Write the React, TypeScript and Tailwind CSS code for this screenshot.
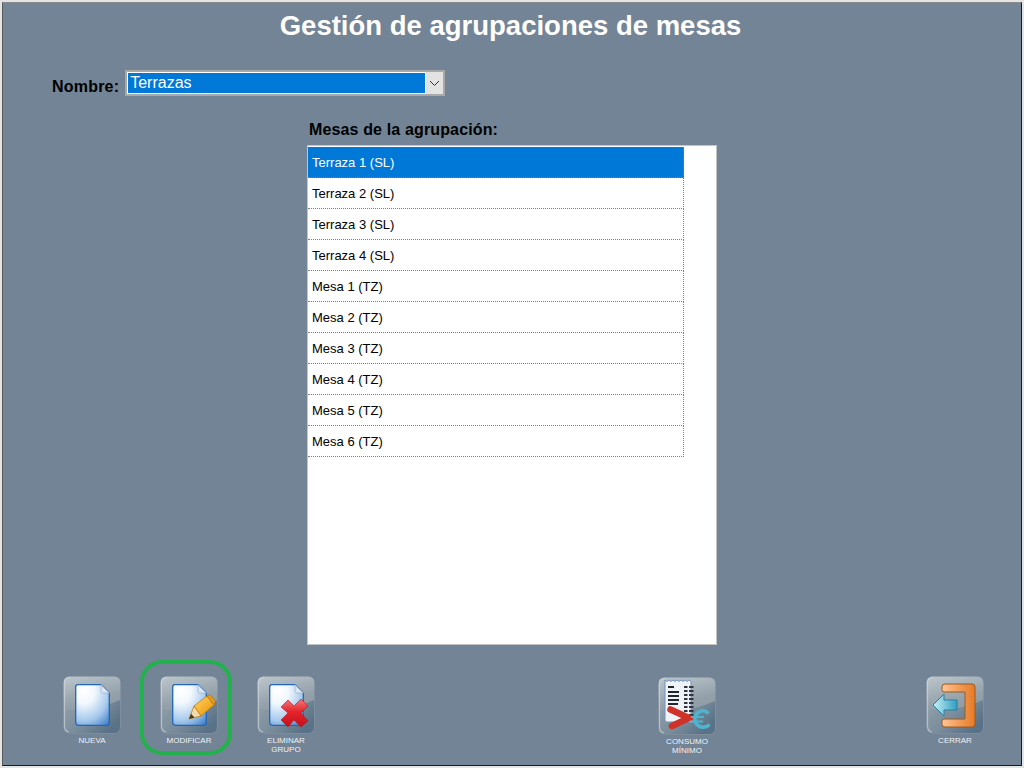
import React from "react";

const rows = [
  "Terraza 1 (SL)", "Terraza 2 (SL)", "Terraza 3 (SL)", "Terraza 4 (SL)",
  "Mesa 1 (TZ)", "Mesa 2 (TZ)", "Mesa 3 (TZ)", "Mesa 4 (TZ)", "Mesa 5 (TZ)", "Mesa 6 (TZ)",
];

function Page({ id, x = 12 }: { id: string; x?: number }) {
  return (
    <g transform={`translate(${x} 8)`}>
      <defs>
        <radialGradient id={`${id}p`} cx="0.25" cy="0.15" r="1.05">
          <stop offset="0" stopColor="#ffffff" />
          <stop offset="0.3" stopColor="#f2f8fd" />
          <stop offset="0.7" stopColor="#a6c9ec" />
          <stop offset="1" stopColor="#4a88cc" />
        </radialGradient>
      </defs>
      <path d="M3 0.7 H26 L34.3 9 V38 Q34.3 41.3 31 41.3 H4 Q0.7 41.3 0.7 38 V3 Q0.7 .7 3 .7Z" fill={`url(#${id}p)`} stroke="#2266b8" strokeWidth="1.3" />
      <path d="M26 0.7 V7 Q26 9 28 9 H34.3Z" fill="#dbe7f2" stroke="#9fb8d2" strokeWidth="0.8" />
    </g>
  );
}

function Tile({ id, children }: { id: string; children?: React.ReactNode }) {
  return (
    <svg width="58" height="58" viewBox="0 0 58 58" className="block shrink-0">
      <defs>
        <linearGradient id={`${id}a`} x1="0" y1="0" x2="0.25" y2="1">
          <stop offset="0" stopColor="#bcc6cc" />
          <stop offset="0.5" stopColor="#94a1ab" />
          <stop offset="1" stopColor="#87959f" />
        </linearGradient>
        <linearGradient id={`${id}b`} x1="0" y1="0" x2="1" y2="0.6">
          <stop offset="0" stopColor="#93a1ab" />
          <stop offset="0.55" stopColor="#7a8d9c" />
          <stop offset="1" stopColor="#5a7287" />
        </linearGradient>
      </defs>
      <rect x="0.5" y="0.5" width="57" height="57" rx="6" fill={`url(#${id}a)`} />
      <path d="M1 33 Q28 37 57 24 V51 Q57 57 51 57 H7 Q1 57 1 51Z" fill={`url(#${id}b)`} />
      <path d="M1.5 7 Q1.5 1.5 7 1.5 M1.5 7 V50 Q1.5 55 6 56" fill="none" stroke="#d5dce0" strokeOpacity="0.6" strokeWidth="1.2" />
      {children}
    </svg>
  );
}

function ToolButton({ label, icon, className }: { label: React.ReactNode; icon: React.ReactNode; className: string }) {
  return (
    <div className={`flex w-[58px] flex-col items-center ${className}`}>
      {icon}
      <div className="mt-[2px] w-[80px] shrink-0 text-center text-[8px] leading-[9px] text-[#eef3f8]">{label}</div>
    </div>
  );
}

function Pencil() {
  return (
    <g>
      <defs>
        <linearGradient id="pen" x1="0" y1="0" x2="1" y2="1">
          <stop offset="0" stopColor="#ffd765" />
          <stop offset="0.55" stopColor="#f6b02c" />
          <stop offset="1" stopColor="#d98a12" />
        </linearGradient>
      </defs>
      <path d="M34 30 L47 20 L54 29 L41 40Z" fill="url(#pen)" stroke="#b87a14" strokeWidth="0.8" />
      <path d="M34 30 L29 43 L41 40Z" fill="#f5d9a8" stroke="#b87a14" strokeWidth="0.8" />
      <path d="M31 37.8 L29 43 L34.5 41.6Z" fill="#4a3a22" />
      <path d="M47 20 L50 18.6 L55.5 25 L54 29Z" fill="#e79a1e" stroke="#b87a14" strokeWidth="0.8" />
    </g>
  );
}

function RedX() {
  return (
    <g>
      <defs>
        <linearGradient id="rx" x1="0" y1="0" x2="0" y2="1">
          <stop offset="0" stopColor="#f27a7a" />
          <stop offset="0.45" stopColor="#e5242c" />
          <stop offset="1" stopColor="#c40f18" />
        </linearGradient>
      </defs>
      <path d="M24 31 L31 24 L37 30 L44 23 L51 30 L44 37 L51 45 L44 51 L37 44 L31 51 L24 44 L31 37Z" fill="url(#rx)" stroke="#b5141b" strokeWidth="0.6" strokeLinejoin="round" />
    </g>
  );
}

function Receipt() {
  const lines: [number, number, number][] = [
    [9, 10, 6], [14, 10, 11], [18, 10, 11], [22, 10, 11], [26, 10, 10], [30, 10, 5],
  ];
  const col: number[] = [9, 13, 17, 21, 25, 29, 33, 37];
  return (
    <g>
      <path d="M7 3 l2 1.4 2-1.4 2 1.4 2-1.4 2 1.4 2-1.4 2 1.4 2-1.4 2 1.4 2-1.4 2 1.4 2-1.4 2 1.4 V43 Q37 45 35 45 H9 Q7 45 7 43Z" fill="#eef3fa" stroke="#6f93c2" strokeWidth="1" />
      {lines.map(([y, x, w]) => (
        <rect key={y} x={x} y={y} width={w} height="2" fill="#22262c" />
      ))}
      {col.map((y) => (
        <g key={y}>
          <rect x="26" y={y} width="3.5" height="2" fill="#33373d" />
          <rect x="31" y={y} width="4.5" height="2" fill="#33373d" />
        </g>
      ))}
      <path d="M12.5 32.5 L31 41 L14 49" fill="none" stroke="#cf3228" strokeWidth="6.5" strokeLinecap="round" strokeLinejoin="miter" />
      <path d="M49.5 35.5 Q46.5 33 43 34 Q37 36 37 42 Q37 48 43 50 Q47 51 50.5 48.5" fill="none" stroke="#4fb4cf" strokeWidth="3.6" strokeLinecap="round" />
      <path d="M33 40 H46 M33 44.5 H45" fill="none" stroke="#4fb4cf" strokeWidth="2" />
    </g>
  );
}

function Exit() {
  return (
    <g>
      <defs>
        <linearGradient id="ex" x1="0" y1="0" x2="1" y2="0">
          <stop offset="0" stopColor="#fdc596" />
          <stop offset="0.55" stopColor="#f19a54" />
          <stop offset="1" stopColor="#e67a28" />
        </linearGradient>
        <linearGradient id="ar" x1="0" y1="0" x2="1" y2="0">
          <stop offset="0" stopColor="#c9f2f8" />
          <stop offset="1" stopColor="#2e9fc0" />
        </linearGradient>
      </defs>
      <path d="M19 8 H46 Q49 8 49 11 V48 Q49 51 46 51 H19 Q16 51 16 48 V45 Q16 43 18 43 H39 V16 H18 Q16 16 16 14 V11 Q16 8 19 8Z" fill="url(#ex)" stroke="#9a5a1c" strokeWidth="1" />
      <path d="M7 29 L18 18 V24 H31 V34 H18 V40Z" fill="url(#ar)" stroke="#2a7f9f" strokeWidth="1" strokeLinejoin="round" />
    </g>
  );
}

export default function App() {
  return (
    <div className="relative h-[768px] w-[1024px] bg-[#e4e4e4] p-[2px] font-['Liberation_Sans',Arial,sans-serif]">
      <div className="flex h-full flex-col border border-b-[#1a1a1a] border-l-[#5a5a5a] border-r-[#1a1a1a] border-t-[#8a8a8a] bg-[#738496]">
        <h1 className="mt-[8px] h-[30px] pr-[3px] text-center text-[27.5px] font-bold leading-[30px] text-white">
          Gestión de agrupaciones de mesas
        </h1>
        <div className="ml-[49px] mt-[29px] flex h-[26px] items-start">
          <span className="mt-[8px] text-[16px] font-bold leading-[18px] tracking-[0.2px] text-black">Nombre:</span>
          <div className="ml-[6px] flex h-[26px] w-[320px] border-2 border-[#a9a9a9]">
            <div className="flex-1 border border-white bg-[#0078d7] pl-[2px] text-[16px] leading-[19px] text-white">Terrazas</div>
            <div className="flex w-[17px] items-center justify-center bg-[#e3e3e3]">
              <svg width="11" height="7" viewBox="0 0 11 7"><path d="M1 1 L5.5 5.5 L10 1" fill="none" stroke="#333" strokeWidth="1" /></svg>
            </div>
          </div>
        </div>
        <div className="ml-[304px] mt-[25px] w-[410px]">
          <div className="ml-[2px] h-[24px] text-[16px] font-bold leading-[18px] tracking-[0.14px] text-black">Mesas de la agrupación:</div>
          <div className="h-[500px] border border-[#c4c4c4] bg-white pt-[1px]">
            {rows.map((r, i) => (
              <div
                key={r}
                className={`h-[31px] w-[376px] border-b border-r border-dotted border-b-[#808080] border-r-[#808080] pl-[4px] pt-[1px] text-[13px] leading-[30px] ${i === 0 ? "bg-[#0078d7] text-white" : "text-black"}`}
              >
                {r}
              </div>
            ))}
          </div>
        </div>
        <div className="relative mt-[31px] flex items-start">
          <ToolButton className="ml-[60px]" label="NUEVA" icon={<Tile id="a"><Page id="a" /></Tile>} />
          <ToolButton className="ml-[39px]" label="MODIFICAR" icon={<Tile id="b"><Page id="b" /><Pencil /></Tile>} />
          <ToolButton className="ml-[39px]" label={<>ELIMINAR<br />GRUPO</>} icon={<Tile id="c"><Page id="c" /><RedX /></Tile>} />
          <ToolButton className="ml-[343px] mt-[1px]" label={<>CONSUMO<br />MÍNIMO</>} icon={<Tile id="d"><Receipt /></Tile>} />
          <ToolButton className="ml-[210px]" label="CERRAR" icon={<Tile id="e"><Exit /></Tile>} />
        </div>
      </div>
      <div className="absolute left-[140px] top-[660px] h-[95px] w-[92px] rounded-[22px] border-4 border-[#22b14c]" />
    </div>
  );
}
